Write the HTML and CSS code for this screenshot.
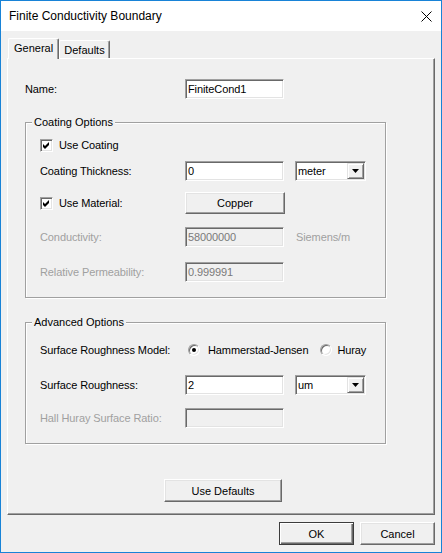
FILE: index.html
```html
<!DOCTYPE html>
<html>
	<head>
		<meta charset="UTF-8">
		<title>Finite Conductivity Boundary</title>
		<link rel="stylesheet" href="styles.css">
	</head>
	<body>
		<div class="window">
			<div class="titlebar">
				<span class="title">Finite Conductivity Boundary</span>
				<svg class="close" width="11" height="11" viewBox="0 0 11 11">
					<path d="M0.5 0.5 L10.5 10.5 M10.5 0.5 L0.5 10.5" stroke="#000" stroke-width="1" fill="none"/>
				</svg>
			</div>
			<div class="main">
				<div class="tabs">
					<div class="tab active">General</div>
					<div class="tab">Defaults</div>
				</div>
				<div class="page">
					<div class="row">
						<span class="label namelabel">Name:</span>
						<div class="edit">FiniteCond1</div>
					</div>
					<div class="group coating">
						<span class="legend">Coating Options</span>
						<div class="row">
							<span class="label">
								<span class="check">
									<svg width="9" height="9" viewBox="0 0 9 9"><polygon points="1,3 3,5 7,1 7,4 3,8 1,6" fill="#000"/></svg>
								</span>
								<span>Use Coating</span>
							</span>
						</div>
						<div class="row r-thick">
							<span class="label">Coating Thickness:</span>
							<div class="edit">0</div>
							<div class="combo">
								<span>meter</span>
								<span class="drop"><svg width="7" height="4" viewBox="0 0 7 4"><polygon points="0,0 7,0 3.5,4" fill="#000"/></svg></span>
							</div>
						</div>
						<div class="row r-mat">
							<span class="label">
								<span class="check">
									<svg width="9" height="9" viewBox="0 0 9 9"><polygon points="1,3 3,5 7,1 7,4 3,8 1,6" fill="#000"/></svg>
								</span>
								<span>Use Material:</span>
							</span>
							<button class="btn copper">Copper</button>
						</div>
						<div class="row r-cond">
							<span class="label off">Conductivity:</span>
							<div class="edit disabled">58000000</div>
							<span class="unit off">Siemens/m</span>
						</div>
						<div class="row r-perm">
							<span class="label off">Relative Permeability:</span>
							<div class="edit disabled">0.999991</div>
						</div>
					</div>
					<div class="group advanced">
						<span class="legend">Advanced Options</span>
						<div class="row">
							<span class="label">Surface Roughness Model:</span>
							<span class="radio on first"></span>
							<span class="rtext">Hammerstad-Jensen</span>
							<span class="radio second"></span>
							<span class="rtext2">Huray</span>
						</div>
						<div class="row r-rough">
							<span class="label">Surface Roughness:</span>
							<div class="edit">2</div>
							<div class="combo">
								<span>um</span>
								<span class="drop"><svg width="7" height="4" viewBox="0 0 7 4"><polygon points="0,0 7,0 3.5,4" fill="#000"/></svg></span>
							</div>
						</div>
						<div class="row r-hall">
							<span class="label off">Hall Huray Surface Ratio:</span>
							<div class="edit disabled"></div>
						</div>
					</div>
					<button class="btn defaults">Use Defaults</button>
				</div>
				<div class="footer">
					<button class="btn default">OK</button>
					<button class="btn">Cancel</button>
				</div>
			</div>
		</div>
	</body>
</html>
```

FILE: styles.css
```css
*{
	margin: 0;
	padding: 0;
	box-sizing: border-box;
}
body{
	font-family: "Liberation Sans", Arial, sans-serif;
	font-size: 11px;
	color: #000;
	background: #f0f0f0;
}
.window{
	width: 442px;
	height: 553px;
	border: 1px solid #1883d7;
	background: #f0f0f0;
	display: flex;
	flex-direction: column;
}
.titlebar{
	height: 30px;
	background: #fff;
	display: flex;
	align-items: center;
	justify-content: space-between;
	padding: 0 9px 0 8px;
}
.title{
	font-size: 12px;
}
.close{
	display: block;
}
.main{
	padding: 0 6px;
}
.tabs{
	display: flex;
	align-items: flex-end;
	margin-top: 7px;
	padding-left: 1px;
}
.tab{
	width: 51px;
	height: 18px;
	line-height: 17px;
	text-align: center;
	border: 1px solid #fff;
	border-right-color: #696969;
	border-bottom: 0;
	box-shadow: inset -1px 0 0 #a0a0a0;
	border-radius: 2px 2px 0 0;
	padding-top: 1px;
}
.tab.active{
	height: 21px;
	margin-bottom: -1px;
	position: relative;
	z-index: 1;
	background: #f0f0f0;
	padding-top: 0;
	line-height: 18px;
	text-align: left;
	padding-left: 5px;
}
.page{
	height: 457px;
	border: 1px solid;
	border-color: #fff #696969 #696969 #fff;
	box-shadow: inset -1px -1px 0 #a0a0a0;
	padding: 20px 0 0 17px;
}
.row{
	display: flex;
	align-items: center;
	height: 20px;
	letter-spacing: -0.1px;
}
.label{
	width: 145px;
	flex: none;
	display: flex;
	align-items: center;
	white-space: nowrap;
}
.namelabel{
	width: 160px;
}
.off{
	color: #a0a0a0;
}
.edit{
	width: 99px;
	height: 20px;
	border: 1px solid;
	border-color: #a0a0a0 #fff #fff #a0a0a0;
	box-shadow: inset 1px 1px 0 #696969, inset -1px -1px 0 #e3e3e3;
	background: #fff;
	padding-left: 2px;
	display: flex;
	align-items: center;
}
.edit.disabled{
	background: #f0f0f0;
	color: #7a7a7a;
}
.combo{
	width: 71px;
	height: 20px;
	margin-left: 11px;
	border: 1px solid;
	border-color: #a0a0a0 #fff #fff #a0a0a0;
	box-shadow: inset 1px 1px 0 #696969, inset -1px -1px 0 #e3e3e3;
	background: #fff;
	padding: 1px 1px 1px 2px;
	display: flex;
	align-items: center;
	justify-content: space-between;
}
.drop{
	width: 17px;
	height: 16px;
	border: 1px solid;
	border-color: #e3e3e3 #696969 #696969 #e3e3e3;
	box-shadow: inset 1px 1px 0 #fff, inset -1px -1px 0 #a0a0a0;
	background: #f0f0f0;
	display: flex;
	align-items: center;
	justify-content: center;
}
.drop svg{
	display: block;
}
.unit{
	margin-left: 12px;
}
.group{
	position: relative;
	width: 361px;
	border: 1px solid #a0a0a0;
	box-shadow: inset 1px 1px 0 #fff, 1px 1px 0 #fff;
	padding: 0 0 15px 14px;
}
.legend{
	position: absolute;
	top: -7px;
	left: 6px;
	line-height: 13px;
	padding: 0 2px;
	background: #f0f0f0;
}
.coating{
	margin-top: 23px;
	padding-top: 12px;
}
.advanced{
	margin-top: 24px;
	padding-top: 17px;
}
.check{
	width: 13px;
	height: 13px;
	flex: none;
	border: 1px solid;
	border-color: #a0a0a0 #fff #fff #a0a0a0;
	box-shadow: inset 1px 1px 0 #696969, inset -1px -1px 0 #e3e3e3;
	background: #fff;
	display: flex;
	align-items: center;
	justify-content: center;
	margin-right: 6px;
}
.check svg{
	display: block;
}
.r-thick{
	margin-top: 6px;
}
.r-mat{
	margin-top: 11px;
	height: 22px;
}
.r-cond{
	margin-top: 13px;
}
.r-perm{
	margin-top: 15px;
}
.r-rough{
	margin-top: 15px;
}
.r-hall{
	margin-top: 13px;
}
.radio{
	width: 12px;
	height: 12px;
	flex: none;
	border-radius: 50%;
	border: 1px solid;
	border-color: #a0a0a0 #fff #fff #a0a0a0;
	box-shadow: inset 1px 1px 0 #696969, inset -1px -1px 0 #e3e3e3;
	background: #fff;
	display: flex;
	align-items: center;
	justify-content: center;
}
.radio.on::after{
	content: "";
	width: 4px;
	height: 4px;
	border-radius: 50%;
	background: #000;
}
.radio.first{
	margin-left: 3px;
}
.rtext{
	margin-left: 8px;
}
.radio.second{
	margin-left: 12px;
}
.rtext2{
	margin-left: 5px;
}
.btn{
	font-family: "Liberation Sans", Arial, sans-serif;
	font-size: 11px;
	color: #000;
	background: #f0f0f0;
	border: 1px solid;
	border-color: #fff #696969 #696969 #fff;
	box-shadow: inset -1px -1px 0 #a0a0a0, inset 1px 1px 0 #e3e3e3;
	width: 75px;
	height: 23px;
}
.btn.default{
	border-color: #3c3c3c;
	box-shadow: inset 1px 1px 0 #fff, inset -1px -1px 0 #696969, inset -2px -2px 0 #a0a0a0;
}
.copper{
	width: 100px;
	height: 22px;
}
.defaults{
	display: block;
	width: 118px;
	margin: 35px 0 0 139px;
}
.footer{
	display: flex;
	justify-content: flex-end;
	gap: 6px;
	padding-top: 7px;
}
```
